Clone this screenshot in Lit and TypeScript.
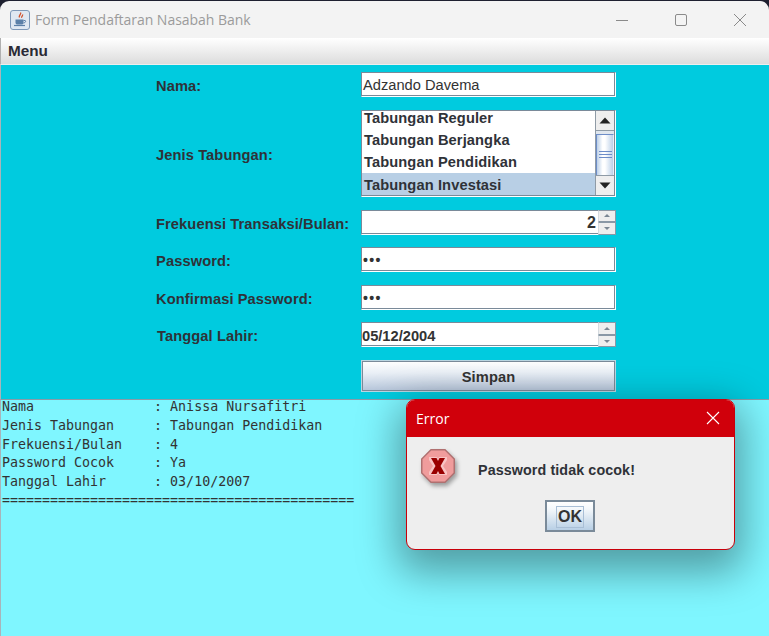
import { LitElement, html, css, svg } from "lit";
import { customElement } from "lit/decorators.js";

const arrowUp = svg`<svg class="arrow" width="12" height="7" viewBox="0 0 12 7"><path d="M6 0.5 L11.5 6.5 H0.5 Z" fill="#222"/></svg>`;
const arrowDown = svg`<svg class="arrow" width="12" height="7" viewBox="0 0 12 7"><path d="M0.5 0.5 H11.5 L6 6.5 Z" fill="#222"/></svg>`;
const tinyUp = svg`<svg width="6" height="3" viewBox="0 0 6 3"><path d="M3 0 L6 3 H0 Z" fill="#7b8794"/></svg>`;
const tinyDown = svg`<svg width="6" height="3" viewBox="0 0 6 3"><path d="M0 0 H6 L3 3 Z" fill="#7b8794"/></svg>`;

const spinner = html`<div class="spin">
  <div class="spin-btn">${tinyUp}</div>
  <div class="spin-btn">${tinyDown}</div>
</div>`;

const output = `Nama               : Anissa Nursafitri
Jenis Tabungan     : Tabungan Pendidikan
Frekuensi/Bulan    : 4
Password Cocok     : Ya
Tanggal Lahir      : 03/10/2007
============================================`;

@customElement("app-root")
export class AppRoot extends LitElement {
  static styles = css`
    :host {
      display: flex;
      flex-direction: column;
      width: 769px;
      height: 636px;
      overflow: hidden;
      position: relative;
      background: #1e2030;
      font-family: "Liberation Sans", Arial, sans-serif;
      color: #333;
    }
    .titlebar {
      flex: none;
      margin-top: 1px;
      height: 37px;
      background: #f3f3f3;
      border-radius: 9px 9px 0 0;
      display: flex;
      align-items: center;
      padding-left: 10px;
      box-sizing: border-box;
    }
    .app-icon { flex: none; margin-right: 5px; }
    .title {
      flex: 1;
      font-family: "Open Sans", "Noto Sans", sans-serif;
      font-size: 14px;
      letter-spacing: -0.03px;
      color: #9b9b9b;
    }
    .wc { flex: none; width: 59px; height: 37px; display: flex; align-items: center; justify-content: center; }
    .menubar {
      flex: none;
      height: 27px;
      box-sizing: border-box;
      background: linear-gradient(#ffffff, #dcdcdc);
      border-bottom: 1px solid #eeeeee;
      border-left: 1px solid #b0b0b0;
      padding: 4px 0 0 7px;
      font-size: 15.3px;
      font-weight: bold;
      line-height: 18px;
      color: #2a2a35;
    }
    .form {
      flex: none;
      height: 334px;
      box-sizing: border-box;
      padding: 7.4px 0 0 155px;
      background: #00cbdf;
      border-left: 1px solid #a8b4ba;
      display: grid;
      grid-template-columns: 205px 255px;
      grid-auto-rows: min-content;
      row-gap: 12.6px;
    }
    .label {
      font-size: 14.67px;
      font-weight: bold;
      letter-spacing: 0.1px;
      align-self: center;
      padding-top: 3px;
      color: #2f3238;
    }
    .label.shift { padding-left: 1px; }
    .field {
      height: 25px;
      box-sizing: border-box;
      background: #fff;
      border: 1px solid;
      border-color: #7a8a99 #fff #fff #7a8a99;
      box-shadow: inset -1px -1px 0 #7a8a99;
      display: flex;
      align-items: center;
      padding: 1px 0 0 1px;
      font-size: 14.67px;
      color: #333;
    }
    .dots { font-size: 14px; font-weight: bold; }
    .dots span { letter-spacing: 1.4px; }
    .bold { font-weight: bold; font-size: 14.67px; }
    .with-spin { padding: 0; border-right: none; }
    .value { flex: 1; padding: 2px 0 0; }
    .value.right { text-align: right; font-size: 16px; padding-right: 2px; }
    .spin {
      flex: none;
      width: 18px;
      height: 25px;
      margin: -1px 0;
      display: flex;
      flex-direction: column;
    }
    .spin-btn {
      flex: 1;
      background: #eeeeee;
      border: 1px solid #8a98a6;
      border-left-color: #d5dbe0;
      box-sizing: border-box;
      display: flex;
      align-items: center;
      justify-content: center;
    }
    .listbox {
      height: 87px;
      box-sizing: border-box;
      border: 1px solid;
      border-color: #7a8a99 #fff #fff #7a8a99;
      box-shadow: inset -1px -1px 0 #7a8a99;
      background: #fff;
      display: flex;
      padding: 0 1px 1px 0;
    }
    .items {
      flex: 1;
      min-width: 0;
      display: flex;
      flex-direction: column;
      justify-content: flex-end;
    }
    .item {
      flex: none;
      height: 22.4px;
      line-height: 24.4px;
      padding-left: 2px;
      font-size: 14.67px;
      font-weight: bold;
      letter-spacing: 0.1px;
      color: #2f3238;
    }
    .item.first { height: 17px; line-height: 15px; }
    .item.sel { background: #b8cfe5; }
    .scroll {
      flex: none;
      width: 19px;
      display: flex;
      flex-direction: column;
      background: #dfe6ee;
      border-left: 1px solid #8f9ba6;
      box-sizing: border-box;
    }
    .sb-btn {
      flex: none;
      height: 20px;
      background: #eeeeee;
      border-bottom: 1px solid #8f9ba6;
      box-sizing: border-box;
      display: flex;
      align-items: center;
      justify-content: center;
    }
    .sb-btn.down { border-bottom: none; border-top: 1px solid #8f9ba6; }
    .thumb {
      flex: 1;
      margin-top: 3px;
      background: linear-gradient(90deg, #bcd0e8, #ffffff 35%, #ffffff 50%, #bcd0e8);
      border: 1px solid #6d8dc8;
      border-right-color: #e8eff8;
      border-bottom: 0;
      display: flex;
      flex-direction: column;
      align-items: center;
      justify-content: center;
      gap: 2px;
      box-sizing: border-box;
    }
    .thumb i { display: block; width: 13px; height: 1px; background: #6d8dc8; }
    .btn-save {
      grid-column: 2;
      height: 32px;
      box-sizing: border-box;
      border: 1px solid #b9d6e2;
      outline: 1px solid #7a8a99;
      outline-offset: -2px;
      background: linear-gradient(#ffffff, #e9eff6 40%, #b5c5da);
      font-family: inherit;
      font-size: 14.67px;
      font-weight: bold;
      letter-spacing: 0.1px;
      color: #333;
      padding: 3px 0 0;
    }
    .output {
      flex: 1;
      margin: 0;
      background: #7ff6ff;
      border-top: 1px solid #8a9aa6;
      border-left: 1px solid #a8b4ba;
      padding: 0 0 0 1px;
      overflow: hidden;
    }
    .output pre {
      margin: -2px 0 0;
      font-family: "DejaVu Sans Mono", monospace;
      font-size: 13.3px;
      line-height: 18.75px;
      color: #333;
      white-space: pre;
    }
    .dialog {
      position: absolute;
      left: 406px;
      top: 399px;
      width: 329px;
      height: 151px;
      box-sizing: border-box;
      border-radius: 9px;
      border: 1px solid #c8000a;
      background: #eeeeee;
      box-shadow: 0 14px 40px 8px rgba(0, 0, 0, 0.36);
      display: flex;
      flex-direction: column;
      overflow: hidden;
    }
    .dlg-head {
      flex: none;
      height: 38px;
      margin: -1px -1px 0;
      background: #d0000b;
      display: flex;
      align-items: center;
      justify-content: space-between;
      padding: 0 15px 0 10px;
    }
    .dlg-title {
      font-family: "Open Sans", "Noto Sans", sans-serif;
      font-size: 14px;
      color: #fff;
    }
    .dlg-body {
      flex: 1;
      display: flex;
      flex-direction: column;
    }
    .dlg-msg {
      display: flex;
      align-items: flex-start;
      padding: 12px 0 0 14px;
      height: 50px;
      box-sizing: content-box;
    }
    .err-icon { flex: none; margin-right: 23px; filter: drop-shadow(2px 3px 2px rgba(0, 0, 0, 0.35)); }
    .dlg-text {
      font-size: 14.3px;
      font-weight: bold;
      letter-spacing: 0.1px;
      color: #2f3238;
      padding-top: 13px;
    }
    .ok-row { display: flex; padding: 0 0 0 138px; margin-top: auto; margin-bottom: 17px; }
    .ok {
      width: 50px;
      height: 32px;
      box-sizing: border-box;
      border: 2px solid #7a8a99;
      padding-top: 2px;
      background: linear-gradient(#ffffff, #f4f8fb 25%, #b8cfe5);
      font-family: inherit;
      font-size: 16px;
      font-weight: bold;
      color: #333;
      display: flex;
      align-items: center;
      justify-content: center;
    }
    .ok span { display: block; outline: 1px solid #a9bfd6; padding: 1px 1px; line-height: 18px; }
  `;

  render() {
    return html`
      <div class="titlebar">
        <svg class="app-icon" width="20" height="20" viewBox="0 0 20 20">
          <rect x="0.5" y="0.5" width="19" height="19" rx="2.5" fill="#dfe7f2" stroke="#7d97b8"/>
          <path d="M10.5 2.5c1.5 1.5-2.5 3-1 5M12.5 4.5c.8 1-1.5 2-.8 3.3" stroke="#d2502a" stroke-width="1.3" fill="none"/>
          <path d="M5.5 9.5h8v3c0 1.5-1 2-2 2h-4c-1 0-2-.5-2-2z" fill="#5b7fa8"/>
          <path d="M13.5 10.5h1.5c1 0 1 2.2-1.5 2.6" stroke="#5b7fa8" fill="none"/>
          <path d="M4 15.5h11" stroke="#5b7fa8" stroke-width="1.2"/>
        </svg>
        <div class="title">Form Pendaftaran Nasabah Bank</div>
        <div class="wc"><svg width="14" height="14" viewBox="0 0 14 14"><path d="M1 7.5h12" stroke="#8a8a8a" stroke-width="1"/></svg></div>
        <div class="wc"><svg width="14" height="14" viewBox="0 0 14 14"><rect x="1.5" y="1.5" width="11" height="11" rx="1.5" fill="none" stroke="#8a8a8a" stroke-width="1"/></svg></div>
        <div class="wc"><svg width="14" height="14" viewBox="0 0 14 14"><path d="M1 1l12 12M13 1L1 13" stroke="#8a8a8a" stroke-width="1"/></svg></div>
      </div>
      <div class="menubar">Menu</div>
      <div class="form">
        <div class="label">Nama:</div>
        <div class="field">Adzando Davema</div>

        <div class="label">Jenis Tabungan:</div>
        <div class="listbox">
          <div class="items">
            <div class="item first">Tabungan Reguler</div>
            <div class="item">Tabungan Berjangka</div>
            <div class="item">Tabungan Pendidikan</div>
            <div class="item sel">Tabungan Investasi</div>
          </div>
          <div class="scroll">
            <div class="sb-btn">${arrowUp}</div>
            <div class="thumb"><i></i><i></i><i></i></div>
            <div class="sb-btn down">${arrowDown}</div>
          </div>
        </div>

        <div class="label">Frekuensi Transaksi/Bulan:</div>
        <div class="field with-spin bold"><div class="value right">2</div>${spinner}</div>

        <div class="label">Password:</div>
        <div class="field dots"><span>•••</span></div>

        <div class="label">Konfirmasi Password:</div>
        <div class="field dots"><span>•••</span></div>

        <div class="label shift">Tanggal Lahir:</div>
        <div class="field with-spin bold"><div class="value">05/12/2004</div>${spinner}</div>

        <button class="btn-save">Simpan</button>
      </div>
      <div class="output"><pre>${output}</pre></div>
      <div class="dialog">
        <div class="dlg-head">
          <span class="dlg-title">Error</span>
          <svg width="14" height="14" viewBox="0 0 14 14"><path d="M1 1l12 12M13 1L1 13" stroke="#fff" stroke-width="1.1"/></svg>
        </div>
        <div class="dlg-body">
          <div class="dlg-msg">
            <svg class="err-icon" width="34" height="34" viewBox="0 0 34 34">
              <path d="M10 .75h14L33.25 10v14L24 33.25H10L.75 24V10z" fill="#f09c9c" stroke="#b07070" stroke-width="1.5"/>
              <path d="M8 8h8l1 2 1-2h8v3l-4 6 4 6v3h-8l-1-2-1 2H8v-3l4-6-4-6z" fill="#f8c4c4"/>
              <path d="M10 9h5.5l1.500 3 1.500-3H24l-4.500 8 4.500 8h-5.500L17 22l-1.500 3H10l4.500-8z" fill="#990000"/>
            </svg>
            <div class="dlg-text">Password tidak cocok!</div>
          </div>
          <div class="ok-row"><div class="ok"><span>OK</span></div></div>
        </div>
      </div>
    `;
  }
}
